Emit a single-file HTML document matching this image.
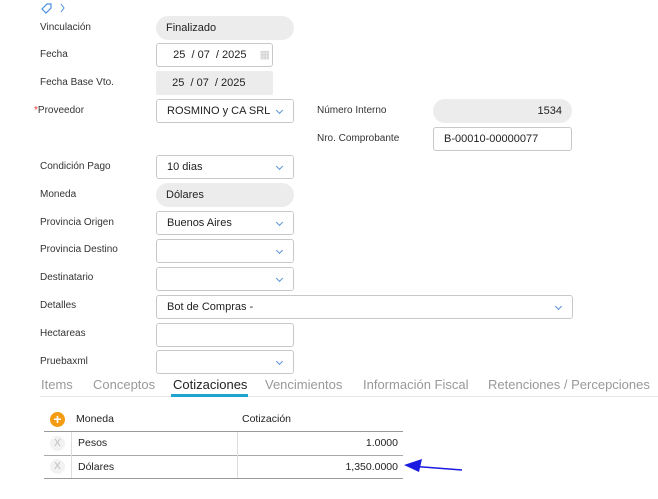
<!DOCTYPE html>
<html><head><meta charset="utf-8"><style>
body{margin:0;width:658px;height:499px;background:#fff;font-family:"Liberation Sans",sans-serif;position:relative;overflow:hidden;color:#222}
.l{position:absolute;left:40px;font-size:10px;color:#333}
.i{position:absolute;box-sizing:border-box;height:24px;border:1px solid #c8c8c8;border-radius:3px;font-size:11px;line-height:22px;padding-left:10px;color:#222;background:#fff;overflow:hidden;white-space:nowrap}
.p{border:none;background:#ececec;border-radius:12px;line-height:24px}
.g{border:none;background:#ececec;border-radius:2px;line-height:24px}
.c{position:absolute;right:0;top:0;width:22px;height:22px;background:#fff}
.c:after{content:"";position:absolute;left:6px;top:8px;width:4px;height:4px;border-right:1px solid #5b8fd9;border-bottom:1px solid #5b8fd9;transform:rotate(45deg)}
.t{position:absolute;top:377px;font-size:13px;color:#999}
</style></head><body>
<svg style="position:absolute;left:40px;top:2px" width="30" height="12"><path d="M2 7 L7 2 L11 2 L11 6 L6 11 Z" fill="none" stroke="#4a8fe0" stroke-width="1.2"/><path d="M21 2 L24 6 L21 10" fill="none" stroke="#4a8fe0" stroke-width="1"/></svg>
<div class="l" style="top:22px">Vinculación</div><div class="i p" style="left:156px;top:16px;width:138px">Finalizado</div>
<div class="l" style="top:49px">Fecha</div><div class="i" style="left:156px;top:43px;width:117px">&nbsp;&nbsp;25 &nbsp;/ 07 &nbsp;/ 2025 <span style="color:#ccc;margin-left:10px">▦</span></div>
<div class="l" style="top:77px">Fecha Base Vto.</div><div class="i g" style="left:156px;top:71px;width:117px">&nbsp;&nbsp;25 &nbsp;/ 07 &nbsp;/ 2025</div>
<div class="l" style="top:105px;left:34px"><span style="color:#e33">*</span>Proveedor</div><div class="i" style="left:156px;top:99px;width:138px">ROSMINO y CA SRL<span class="c"></span></div>
<div class="l" style="left:317px;top:105px">Número Interno</div><div class="i p" style="left:433px;top:99px;width:139px;text-align:right;padding-right:10px">1534</div>
<div class="l" style="left:317px;top:133px">Nro. Comprobante</div><div class="i" style="left:433px;top:127px;width:139px">B-00010-00000077</div>
<div class="l" style="top:161px">Condición Pago</div><div class="i" style="left:156px;top:155px;width:138px">10 dias<span class="c"></span></div>
<div class="l" style="top:189px">Moneda</div><div class="i p" style="left:156px;top:183px;width:138px">Dólares</div>
<div class="l" style="top:217px">Provincia Origen</div><div class="i" style="left:156px;top:211px;width:138px">Buenos Aires<span class="c"></span></div>
<div class="l" style="top:244px">Provincia Destino</div><div class="i" style="left:156px;top:239px;width:138px"><span class="c"></span></div>
<div class="l" style="top:272px">Destinatario</div><div class="i" style="left:156px;top:267px;width:138px"><span class="c"></span></div>
<div class="l" style="top:300px">Detalles</div><div class="i" style="left:156px;top:295px;width:417px">Bot de Compras -<span class="c"></span></div>
<div class="l" style="top:328px">Hectareas</div><div class="i" style="left:156px;top:323px;width:138px"></div>
<div class="l" style="top:356px">Pruebaxml</div><div class="i" style="left:156px;top:350px;width:138px"><span class="c"></span></div>
<div style="position:absolute;left:40px;top:396px;width:618px;height:1px;background:#e6e6e6"></div>
<div class="t" style="left:41px">Items</div><div class="t" style="left:93px">Conceptos</div>
<div class="t" style="left:173px;color:#222">Cotizaciones</div>
<div style="position:absolute;left:171px;top:394px;width:77px;height:3px;background:#1fa3d0"></div>
<div class="t" style="left:265px">Vencimientos</div><div class="t" style="left:363px">Información Fiscal</div><div class="t" style="left:488px">Retenciones / Percepciones</div>
<div style="position:absolute;left:50px;top:412px;width:15px;height:15px;border-radius:50%;background:#f39c12;color:#fff;font-size:14px;line-height:14px;text-align:center;font-weight:bold">+</div>
<div style="position:absolute;left:76px;top:413px;font-size:10.5px">Moneda</div>
<div style="position:absolute;left:242px;top:413px;font-size:10.5px">Cotización</div>
<div style="position:absolute;left:44px;top:431px;width:359px;height:1px;background:#999"></div>
<div style="position:absolute;left:44px;top:455px;width:359px;height:1px;background:#aaa"></div>
<div style="position:absolute;left:44px;top:478px;width:359px;height:1px;background:#999"></div>
<div style="position:absolute;left:71px;top:432px;width:1px;height:46px;background:#ddd"></div>
<div style="position:absolute;left:237px;top:432px;width:1px;height:46px;background:#ddd"></div>
<div style="position:absolute;left:50px;top:436px;width:15px;height:15px;border-radius:50%;background:#f2f2f2;color:#bbb;font-size:10px;line-height:15px;text-align:center">X</div>
<div style="position:absolute;left:50px;top:459px;width:15px;height:15px;border-radius:50%;background:#f2f2f2;color:#bbb;font-size:10px;line-height:15px;text-align:center">X</div>
<div style="position:absolute;left:78px;top:437px;font-size:10.5px">Pesos</div>
<div style="position:absolute;right:260px;top:437px;font-size:10.5px">1.0000</div>
<div style="position:absolute;left:78px;top:461px;font-size:10.5px">Dólares</div>
<div style="position:absolute;right:260px;top:461px;font-size:10.5px">1,350.0000</div>
<svg style="position:absolute;left:400px;top:455px" width="65" height="20"><path d="M62 15 L10 11" stroke="#1a1ae0" stroke-width="1.5"/><path d="M4 10 L22 4 L19 17 Z" fill="#1a1ae0"/></svg>
</body></html>
